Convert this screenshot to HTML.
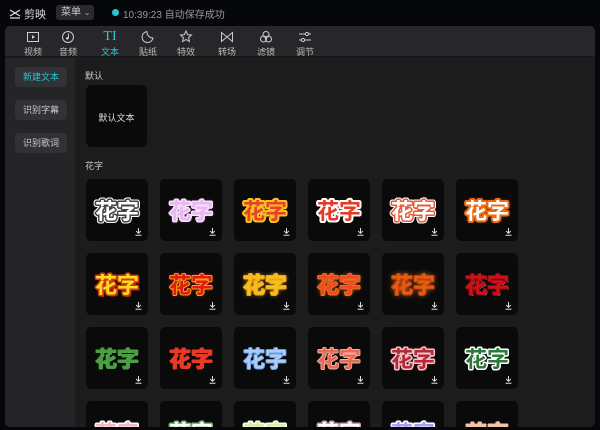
<!DOCTYPE html>
<html><head><meta charset="utf-8"><style>
*{margin:0;padding:0;box-sizing:border-box}
html,body{width:600px;height:430px;overflow:hidden}
body{background:#06070a;font-family:"Liberation Sans","Noto Sans CJK SC",sans-serif;position:relative;color:#ddd}
.top{position:absolute;left:0;top:0;width:600px;height:26px;background:#06070a}
.logo{position:absolute;left:9px;top:6px;font-size:11px;color:#ddd}
.menu{position:absolute;left:56px;top:5px;width:38px;height:15px;background:#2a2a2e;border-radius:3px;font-size:10px;color:#ccc;padding-left:5px;line-height:15px}
.dot{position:absolute;left:112px;top:9px;width:7px;height:7px;border-radius:50%;background:#1fc8d8}
.save{position:absolute;left:123px;top:6px;font-size:10px;color:#999}
.panel{position:absolute;left:5px;top:26px;width:590px;height:401px;background:#1c1c1c;border-radius:5px;overflow:hidden}
.tabs{position:absolute;left:0;top:0;width:590px;height:31px;background:#27272b;border-bottom:1px solid #161616}
.tab{position:absolute;top:0;width:40px;text-align:center;font-size:9px;color:#bbb}
.tab svg{display:block;margin:4px auto 0;width:14px;height:14px}
.tab span{display:block;margin-top:1px}
.side{position:absolute;left:0;top:32px;width:70px;height:369px;background:#252527}
.btn{position:absolute;left:10px;width:52px;height:20px;background:#323236;border-radius:4px;font-size:9px;color:#ccc;text-align:center;line-height:20px}
.lbl{position:absolute;font-size:9px;color:#ccc}
.tile{position:absolute;width:62px;height:62px;background:#0a0a0b;border-radius:5px;overflow:hidden}
.t{position:absolute;left:0;top:18px;width:62px;text-align:center;font-size:22px;font-weight:bold;letter-spacing:0;line-height:26px;font-family:"Noto Sans CJK SC",sans-serif}
.dl{position:absolute;right:6px;bottom:5px;width:7px;height:8px}
</style></head><body>
<div class="top">
<div class="logo"><svg width="12" height="10" viewBox="0 0 12 10" style="vertical-align:-1px"><path d="M1 1L11 7M11 1L1 7M1 9H11" stroke="#ddd" stroke-width="1.3" fill="none"/></svg> 剪映</div>
<div class="menu">菜单 <span style="font-size:8px;color:#aaa">⌄</span></div>
<div class="dot"></div>
<div class="save">10:39:23 自动保存成功</div>
</div>
<div class="panel">
<div class="tabs">
<div class="tab" style="left:8px"><svg viewBox="0 0 14 14"><rect x="1.5" y="2.5" width="11" height="9" stroke="#ccc" fill="none"/><path d="M6 5v4l3-2z" fill="#ccc"/></svg><span>视频</span></div>
<div class="tab" style="left:43px"><svg viewBox="0 0 14 14"><circle cx="7" cy="7" r="5.5" stroke="#ccc" fill="none"/><path d="M7.5 3.5v4.5" stroke="#ccc"/><circle cx="6.3" cy="8.3" r="1.3" fill="#ccc"/></svg><span>音频</span></div>
<div class="tab" style="left:85px;color:#2cc5d3"><div style="font-size:14px;height:17px;line-height:17px;margin-top:2px;font-family:'Liberation Serif',serif">TI</div><span style="margin-top:0">文本</span></div>
<div class="tab" style="left:123px"><svg viewBox="0 0 14 14"><path d="M12 8A5.5 5.5 0 1 1 6 1.6 6 6 0 0 0 12 8z" stroke="#ccc" fill="none"/></svg><span>贴纸</span></div>
<div class="tab" style="left:161px"><svg viewBox="0 0 14 14"><path d="M7 1l1.6 3.6 3.9.4-2.9 2.6.8 3.9L7 9.5l-3.4 2 .8-3.9L1.5 5l3.9-.4z" stroke="#ccc" fill="none"/></svg><span>特效</span></div>
<div class="tab" style="left:202px"><svg viewBox="0 0 14 14"><path d="M1.5 2.5v9L7 7zM12.5 2.5v9L7 7z" stroke="#ccc" fill="none"/></svg><span>转场</span></div>
<div class="tab" style="left:241px"><svg viewBox="0 0 14 14"><circle cx="7" cy="4.5" r="3" stroke="#ccc" fill="none"/><circle cx="4.5" cy="9" r="3" stroke="#ccc" fill="none"/><circle cx="9.5" cy="9" r="3" stroke="#ccc" fill="none"/></svg><span>滤镜</span></div>
<div class="tab" style="left:280px"><svg viewBox="0 0 14 14"><path d="M1 4h12M1 10h12" stroke="#ccc"/><circle cx="9" cy="4" r="1.6" fill="#27272b" stroke="#ccc"/><circle cx="5" cy="10" r="1.6" fill="#27272b" stroke="#ccc"/></svg><span>调节</span></div>
</div>
<div class="side">
<div class="btn" style="top:9px;color:#2cc5d3">新建文本</div>
<div class="btn" style="top:42px">识别字幕</div>
<div class="btn" style="top:75px">识别歌词</div>
</div>
<div class="lbl" style="left:80px;top:43px">默认</div>
<div class="tile" style="left:81px;top:59px;width:61px;height:62px;border-radius:6px"><div style="position:absolute;width:100%;top:26px;text-align:center;font-size:9px;color:#ddd">默认文本</div></div>
<div class="lbl" style="left:80px;top:133px">花字</div>
<div id="g"></div>
</div>
<script>
function o(c,w){w=w||1.5;var s=[];for(var a=0;a<16;a++){var r=a*Math.PI/8;s.push((Math.cos(r)*w).toFixed(1)+'px '+(Math.sin(r)*w).toFixed(1)+'px 0 '+c);}return s.join(',');}
var S=[
['#fff',o('#444',1.5)+','+o('#fff',2.5)],
['#e9b7f2',o('#f6e0ff',1.5)+',0 0 3px #f3a6d8'],
['#e8402a',o('#f7c21f',2)],
['#e53a26',o('#fff',2)],
['#fff',o('#e85a3a',1.5)+','+o('#fff',2.5)],
['#fff',o('#ee6a10',2)+',0 0 4px #f09020'],
['#ffdd22',o('#d53812',1.5)+',2px 2px 0 #b01d0a'],
['#e21a10',o('#f5a10f',1)+',0 0 4px #ff3010'],
['#f5be20',o('#f5a40f',1)+',0 0 5px #f6b020'],
['#f04a22',o('#e8711a',1)+',0 0 5px #f36a1a'],
['#e55d10',o('#c53a10',1)+',0 0 6px #f0801a'],
['#d0101a',o('#90080e',1)+',1px 1px 0 #fff'],
['#4aa040',o('#4aa040',0.6)],
['#e83a26',o('#e83a26',0.6)],
['#a9cdf8',o('#6a9ee0',0.8)],
['#e86a55',o('#f2b0a0',0.8)],
['#b8273a',o('#e9c7c7',1.5)+',0 0 4px #e22'],
['#2a7a3a',o('#fff',1.5)],
['#f0b8c0',o('#fff',1.5)],
['#fff',o('#78b878',1.5)],
['#d8f0a0',o('#fff',1.5)],
['#fff',o('#c9a0a0',1.5)],
['#a8a0f0',o('#fff',1.5)+',0 0 3px #8af'],
['#f5c4a8',o('#f5c4a8',0.6)]
];
var h='';
for(var i=0;i<24;i++){var c=i%6,r=Math.floor(i/6);var x=81+c*74,y=153+r*74;
h+='<div class="tile" style="left:'+x+'px;top:'+y+'px"><div class="t" style="color:'+S[i][0]+';text-shadow:'+(S[i][1]||'none')+'">花字</div><svg class="dl" viewBox="0 0 7 8"><path d="M3.5 0v5M1.2 3l2.3 2.3L5.8 3M0.5 7.3h6" stroke="#ddd" stroke-width="1" fill="none"/></svg></div>';}
document.getElementById('g').innerHTML=h;
</script>
</body></html>
